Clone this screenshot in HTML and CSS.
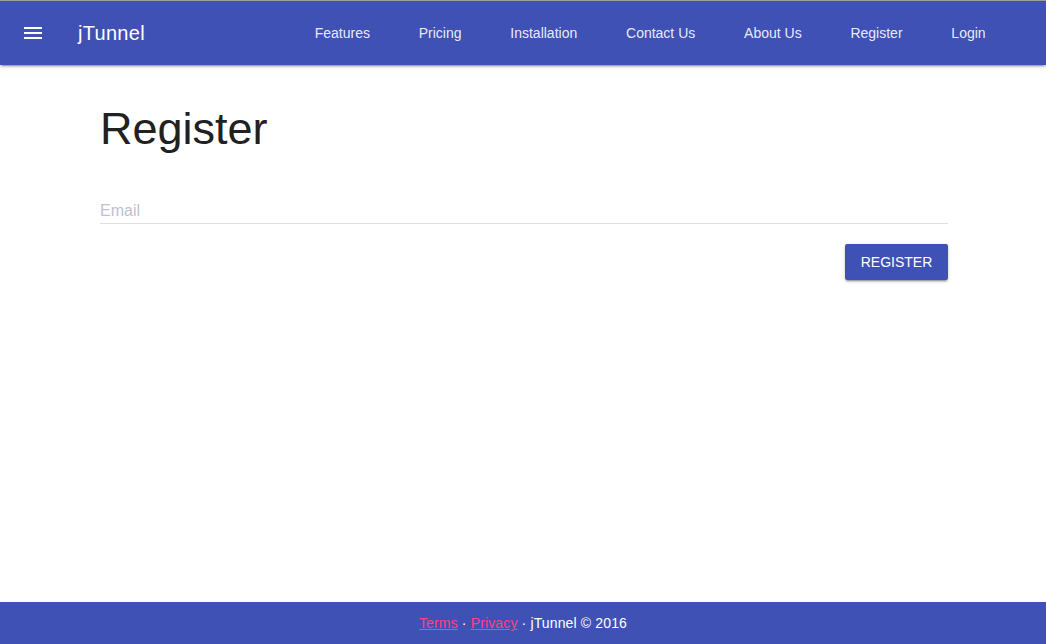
FILE: index.html
```html
<!DOCTYPE html>
<html lang="en">
<head>
<meta charset="utf-8">
<title>jTunnel - Register</title>
<link rel="stylesheet" href="styles.css">
</head>
<body>
<div class="page">
  <header class="header">
    <button class="menu-btn" aria-label="Menu">
      <svg width="18" height="12" viewBox="0 0 18 12"><rect x="0" y="0" width="18" height="2" fill="#fff"/><rect x="0" y="5" width="18" height="2" fill="#fff"/><rect x="0" y="10" width="18" height="2" fill="#fff"/></svg>
    </button>
    <span class="brand">jTunnel</span>
    <nav class="nav">
      <a href="#">Features</a>
      <a href="#">Pricing</a>
      <a href="#">Installation</a>
      <a href="#">Contact Us</a>
      <a href="#">About Us</a>
      <a href="#">Register</a>
      <a href="#">Login</a>
    </nav>
  </header>
  <main class="main">
    <h1 class="title">Register</h1>
    <form class="form">
      <input class="field" type="email" placeholder="Email">
      <div class="actions">
        <button type="button" class="btn">Register</button>
      </div>
    </form>
  </main>
  <footer class="footer">
    <a href="#">Terms</a> · <a href="#">Privacy</a> · jTunnel © 2016
  </footer>
</div>
</body>
</html>
```
FILE: styles.css
```css
* { box-sizing: border-box; }
html, body { margin: 0; padding: 0; }
body {
  font-family: "Liberation Sans", Arial, sans-serif;
  background: #fff;
  border-top: 1px solid #9e9e9e;
}
.page {
  display: flex;
  flex-direction: column;
  height: 643px;
}
.header {
  height: 64px;
  flex: 0 0 64px;
  background: #3f51b5;
  display: flex;
  align-items: center;
  padding: 0 36px 0 24px;
  box-shadow: 0 2px 2px 0 rgba(0,0,0,.14), 0 3px 1px -2px rgba(0,0,0,.2), 0 1px 5px 0 rgba(0,0,0,.12);
  position: relative;
  z-index: 2;
}
.menu-btn {
  background: none;
  border: 0;
  padding: 0;
  width: 18px;
  height: 12px;
  display: flex;
  margin-top: -1px;
}
.brand {
  color: #fff;
  font-size: 20px;
  margin-left: 36px;
  letter-spacing: 0.3px;
}
.nav {
  margin-left: auto;
  display: flex;
}
.nav a {
  color: rgba(255,255,255,.9);
  text-decoration: none;
  font-size: 14px;
  line-height: 64px;
  padding: 0 24.4px;
}
.main {
  flex: 1;
  padding: 40px 98px 0 100px;
}
.title {
  margin: 0;
  font-size: 45px;
  line-height: 48px;
  font-weight: 400;
  color: #212121;
}
.form {
  margin-top: 46px;
}
.field {
  display: block;
  width: 100%;
  border: 0;
  border-bottom: 1px solid #e0e0e0;
  padding: 3px 0;
  font-family: inherit;
  font-size: 16px;
  line-height: 18px;
  height: 25px;
  outline: none;
  background: transparent;
}
.field::placeholder { color: #c2bfd0; }
.actions {
  display: flex;
  justify-content: flex-end;
  margin-top: 20px;
}
.btn {
  background: #3f51b5;
  color: #fff;
  border: 0;
  border-radius: 2px;
  height: 36px;
  width: 103px;
  padding: 0;
  font-family: inherit;
  font-size: 14px;
  text-transform: uppercase;
  box-shadow: 0 2px 2px 0 rgba(0,0,0,.14), 0 3px 1px -2px rgba(0,0,0,.2), 0 1px 5px 0 rgba(0,0,0,.12);
}
.footer {
  flex: 0 0 42px;
  height: 42px;
  background: #3f51b5;
  color: #fff;
  font-size: 14px;
  line-height: 42px;
  text-align: center;
  letter-spacing: 0.14px;
}
.footer a { color: #ff4081; }
```
